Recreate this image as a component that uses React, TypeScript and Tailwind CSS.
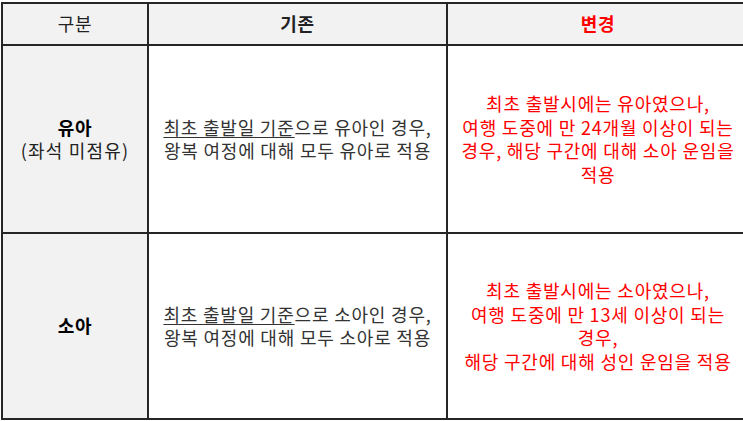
const FONT = "font-['Noto_Sans_CJK_KR','Noto_Sans',sans-serif]";

const App = () => {
  return (
    <div className={`w-[743px] h-[421px] overflow-hidden bg-white pt-[2px] pl-[1px] ${FONT}`}>
      <div className="w-[749px] grid grid-cols-[144px_297px_300px] grid-rows-[40px_186px_184px] gap-[2px] p-[2px] bg-[#262626] text-[18px] leading-[23.5px] tracking-[0.8px]">
        {/* header */}
        <div className="bg-[#f2f2f2] flex items-center justify-center text-[#222]">구분</div>
        <div className="bg-[#f2f2f2] flex items-center justify-center font-bold text-[#222]">기존</div>
        <div className="bg-[#f2f2f2] flex items-center justify-center font-bold text-[#ff0000]">변경</div>

        {/* 유아 */}
        <div className="bg-[#f2f2f2] flex flex-col items-center justify-center text-black">
          <p className="font-bold">유아</p>
          <p className="text-[#222] tracking-[1.2px]">(좌석 미점유)</p>
        </div>
        <div className="bg-white flex flex-col items-center justify-center text-center text-[#333]">
          <p><span className="underline underline-offset-2">최초 출발일 기준</span>으로 유아인 경우,</p>
          <p>왕복 여정에 대해 모두 유아로 적용</p>
        </div>
        <div className="bg-white flex flex-col items-center justify-center text-center text-[#ff0000]">
          <p>최초 출발시에는 유아였으나,</p>
          <p>여행 도중에 만 24개월 이상이 되는</p>
          <p>경우, 해당 구간에 대해 소아 운임을</p>
          <p>적용</p>
        </div>

        {/* 소아 */}
        <div className="bg-[#f2f2f2] flex items-center justify-center font-bold text-black">소아</div>
        <div className="bg-white flex flex-col items-center justify-center text-center text-[#333]">
          <p><span className="underline underline-offset-2">최초 출발일 기준</span>으로 소아인 경우,</p>
          <p>왕복 여정에 대해 모두 소아로 적용</p>
        </div>
        <div className="bg-white flex flex-col items-center justify-center text-center text-[#ff0000]">
          <p>최초 출발시에는 소아였으나,</p>
          <p>여행 도중에 만 13세 이상이 되는</p>
          <p>경우,</p>
          <p>해당 구간에 대해 성인 운임을 적용</p>
        </div>
      </div>
    </div>
  );
};

export default App;
